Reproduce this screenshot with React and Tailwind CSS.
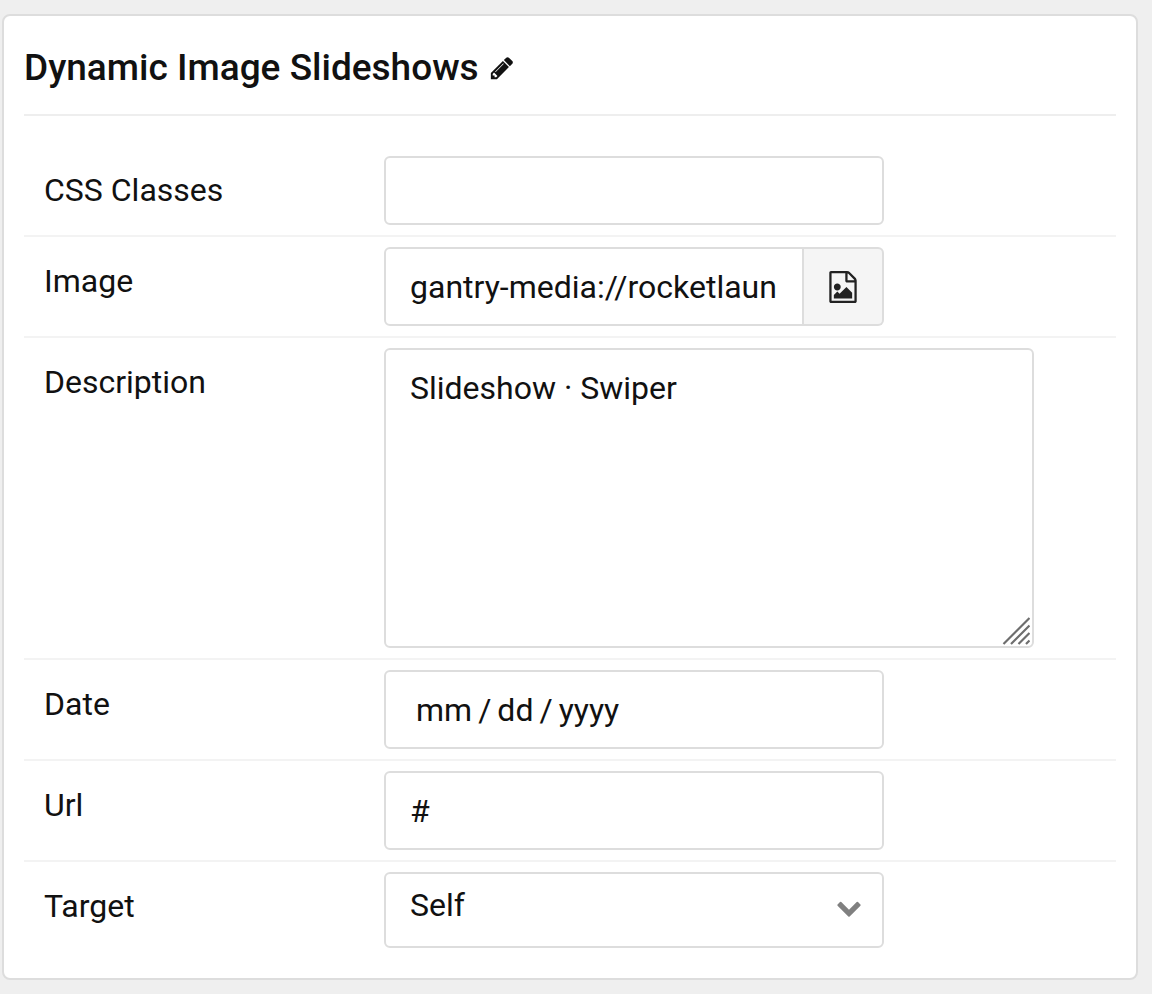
import React from "react";

const box =
  "block w-full rounded-md border-2 border-[#ddd] bg-white px-6 text-[32px] text-[#111] outline-none focus:border-[#aaa]";

function PencilIcon() {
  return (
    <svg viewBox="0 0 1792 1792" className="size-[26px]" fill="currentColor" aria-hidden="true">
      <path d="M491 1536l91-91-235-235-91 91v107h128v128h107zM1014 608q0-22-22-22-10 0-17 7l-542 542q-7 7-7 17 0 22 22 22 10 0 17-7l542-542q7-7 7-17zM960 416l416 416-832 832h-416v-416zM1643 512q0 53-37 90l-166 166-416-416 166-165q36-38 90-38 53 0 91 38l235 234q37 39 37 91z" />
    </svg>
  );
}

function FileImageIcon() {
  return (
    <svg viewBox="0 0 1792 1792" className="size-8" fill="currentColor" aria-hidden="true">
      <path d="M1596 380q28 28 48 76t20 88v1152q0 40-28 68t-68 28h-1344q-40 0-68-28t-28-68v-1600q0-40 28-68t68-28h896q40 0 88 20t76 48zM1152 136v376h376q-10-29-22-41l-313-313q-12-12-41-22zM1536 1664v-1024h-416q-40 0-68-28t-28-68v-416h-768v1536h1280zM1408 1216v320h-1024v-192l192-192 128 128 384-384zM576 1088q-80 0-136-56t-56-136 56-136 136-56 136 56 56 136-56 136-136 56z" />
    </svg>
  );
}

function ChevronIcon() {
  return (
    <svg
      viewBox="0 0 1792 1792"
      className="pointer-events-none absolute top-[22px] right-[22px] size-[26px] text-[#808080]"
      fill="currentColor"
      aria-hidden="true"
    >
      <path d="M1683 808l-742 741q-19 19-45 19t-45-19l-742-741q-19-19-19-45.500t19-45.500l166-165q19-19 45-19t45 19l531 531 531-531q19-19 45-19t45 19l166 165q19 19 19 45.500t-19 45.500z" />
    </svg>
  );
}

function ResizeGrip() {
  return (
    <svg
      viewBox="0 0 28 28"
      className="pointer-events-none absolute right-1 bottom-[3px] size-7"
      stroke="#6e6e6e"
      strokeWidth="2.2"
      aria-hidden="true"
    >
      <path d="M1.500 27L27.500 1M9 27L27.500 8.500M16.500 27L27.500 16M24 27L27.500 23.500" />
    </svg>
  );
}

function Field({ id, label, wide, children }) {
  return (
    <div className="flex items-start border-b-2 border-[#f3f3f3] py-[10px] pl-5 last:border-b-0">
      <label htmlFor={id} className="w-[340px] shrink-0 pt-[10px] leading-[48px]">
        {label}
      </label>
      <div className={wide ? "relative w-full max-w-[650px]" : "relative w-full max-w-[500px]"}>
        {children}
      </div>
    </div>
  );
}

export default function App() {
  return (
    <div className="min-h-screen bg-[#efefef] pt-[14px] pr-[14px] pb-[14px] pl-[2px] font-['Roboto',sans-serif] text-[32px] text-[#111]">
      <form className="rounded-lg border-2 border-[#ddd] bg-white px-5 pb-5" onSubmit={(e) => e.preventDefault()}>
        <div className="flex items-center gap-[10px] border-b-2 border-[#eee] pt-7 pb-[22px]">
          <h4 className="text-[37px] leading-[48px] font-medium">Dynamic Image Slideshows</h4>
          <button type="button" aria-label="Edit title">
            <PencilIcon />
          </button>
        </div>

        <div className="pt-[30px]">
          <Field id="css-classes" label="CSS Classes">
            <input id="css-classes" type="text" className={`${box} h-[69px]`} />
          </Field>

          <Field id="image" label="Image">
            <div className="flex h-[79px]">
              <input
                id="image"
                type="text"
                defaultValue="gantry-media://rocketlaun"
                className="min-w-0 flex-1 rounded-l-md border-2 border-[#ddd] bg-white px-6 text-[32px] text-[#111] outline-none focus:border-[#aaa]"
              />
              <button
                type="button"
                aria-label="Choose image"
                className="flex w-20 items-center justify-center rounded-r-md border-2 border-l-0 border-[#ddd] bg-[#f5f5f5] text-[#222]"
              >
                <FileImageIcon />
              </button>
            </div>
          </Field>

          <Field id="description" label="Description" wide>
            <textarea
              id="description"
              defaultValue="Slideshow · Swiper"
              className={`${box} h-[300px] resize-none py-4 leading-[44px]`}
            />
            <ResizeGrip />
          </Field>

          <Field id="date" label="Date">
            <input
              id="date"
              type="date"
              className={`${box} h-[79px] [&::-webkit-calendar-picker-indicator]:hidden [&::-webkit-datetime-edit]:pl-[5px] [&::-webkit-datetime-edit-text]:px-[5px]`}
            />
          </Field>

          <Field id="url" label="Url">
            <input id="url" type="text" defaultValue="#" className={`${box} h-[79px]`} />
          </Field>

          <Field id="target" label="Target">
            <select id="target" defaultValue="self" className={`${box} h-[76px] appearance-none pb-[10px]`}>
              <option value="self">Self</option>
              <option value="blank">New Window</option>
            </select>
            <ChevronIcon />
          </Field>
        </div>
      </form>
    </div>
  );
}
